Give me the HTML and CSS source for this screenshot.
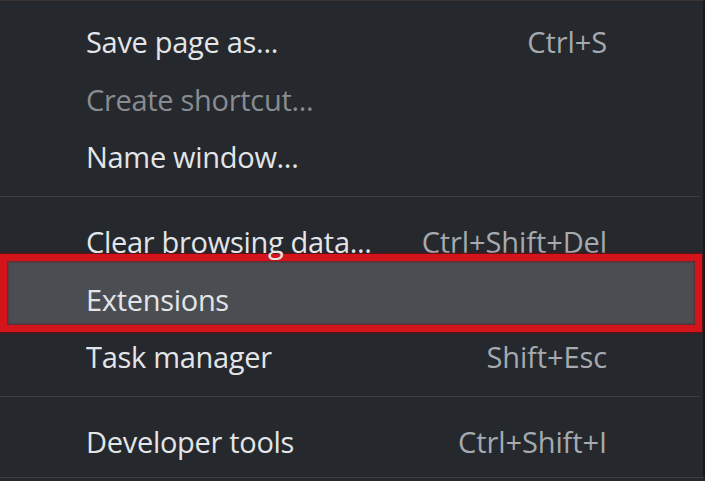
FILE: index.html
```html
<!DOCTYPE html>
<html lang="en">
<head>
<meta charset="utf-8">
<title>Menu</title>
<link rel="stylesheet" href="styles.css">
</head>
<body>
<div class="menu">
  <div class="row"><span class="label">Save page as...</span><span class="key">Ctrl+S</span></div>
  <div class="row disabled"><span class="label">Create shortcut...</span></div>
  <div class="row"><span class="label">Name window...</span></div>
  <div class="sep"></div>
  <div class="row"><span class="label">Clear browsing data...</span><span class="key">Ctrl+Shift+Del</span></div>
  <div class="row active"><span class="label">Extensions</span><span class="mark"></span></div>
  <div class="row"><span class="label">Task manager</span><span class="key">Shift+Esc</span></div>
  <div class="sep"></div>
  <div class="row"><span class="label">Developer tools</span><span class="key">Ctrl+Shift+I</span></div>
</div>
</body>
</html>
```
FILE: styles.css
```css
html, body {
  margin: 0;
  padding: 0;
  background: #25282d;
  height: 100%;
  overflow: hidden;
}

.menu {
  width: 705px;
  height: 478px;
  box-sizing: border-box;
  padding-top: 12px;
  border-top: 1px solid #3a3430;
  border-right: 2px solid #1c1a18;
  border-bottom: 1px solid #3b3d40;
  background: #25282d;
  font-family: "Open Sans", "Noto Sans", sans-serif;
  font-size: 29px;
  color: #e3e5e8;
}

.row {
  height: 57.5px;
  display: flex;
  align-items: center;
  justify-content: space-between;
  padding: 0 96px 0 86px;
  position: relative;
}

.label {
  position: relative;
  z-index: 2;
  letter-spacing: -0.3px;
}

.key {
  color: #a6aaaf;
  letter-spacing: -0.1px;
}

.disabled .label {
  color: #898c90;
}

.sep {
  height: 1px;
  background: #3a3e44;
  margin: 10.5px 3px 16px 0;
}

.mark {
  position: absolute;
  left: 0;
  right: 1px;
  top: -17px;
  bottom: -4px;
  box-sizing: border-box;
  border: 7px solid #d3141b;
  background: #4a4e53;
  box-shadow: 0 0 2px 1px rgba(120, 10, 14, 0.8), inset 0 0 2px 1px rgba(120, 10, 14, 0.6);
  z-index: 1;
}
```
